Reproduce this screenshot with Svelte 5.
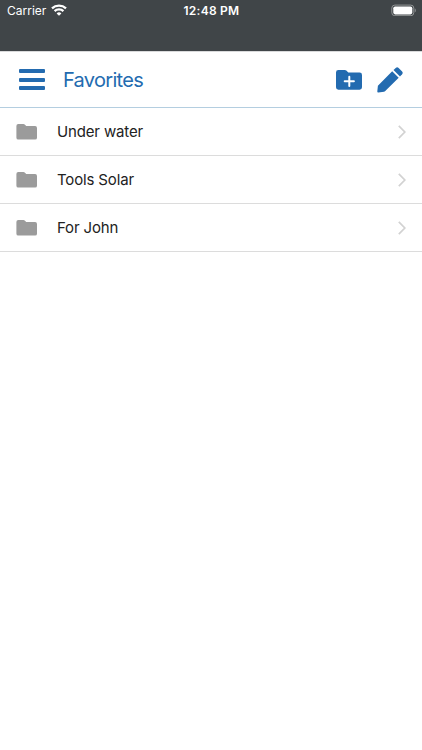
<script lang="ts">
	type Folder = { id: number; name: string };

	let title = 'Favorites';
	let folders: Folder[] = $state([
		{ id: 1, name: 'Under water' },
		{ id: 2, name: 'Tools Solar' },
		{ id: 3, name: 'For John' }
	]);
</script>

<div class="screen">
	<div class="status-bar">
		<div class="status-left">
			<span class="carrier">Carrier</span>
			<svg class="wifi" width="16" height="12" viewBox="0 0 16 12" fill="none" stroke="#fff" stroke-width="2.3">
				<path d="M1 4.4a10.2 10.2 0 0 1 14 0" />
				<path d="M3.6 7.2a6.4 6.4 0 0 1 8.8 0" />
				<path d="M8 11.8 5.6 9.4a3.5 3.5 0 0 1 4.8 0z" fill="#fff" stroke="none" />
			</svg>
		</div>
		<span class="time">12:48 PM</span>
		<div class="status-right">
			<svg width="25" height="12" viewBox="0 0 25 12">
				<rect x="0.8" y="1.1" width="22" height="10.6" rx="3" fill="none" stroke="#929596" stroke-width="1" />
				<rect x="2.3" y="2.4" width="19" height="8" rx="1.8" fill="#fff" />
				<path d="M23.8 4.5v3.8c1.3-.5 1.3-3.3 0-3.8z" fill="#929596" />
			</svg>
		</div>
	</div>

	<header class="toolbar">
		<button class="menu-btn" aria-label="Menu">
			<span class="bar"></span>
			<span class="bar"></span>
			<span class="bar"></span>
		</button>
		<h1>{title}</h1>
		<div class="actions">
			<button aria-label="Add folder">
				<svg width="26" height="20" viewBox="0 0 26 20">
					<path d="M2.4 0h6.4c.6 0 1.1.2 1.5.6l2 2h11.3A2.4 2.4 0 0 1 26 5v12.3a2.4 2.4 0 0 1-2.4 2.4H2.4A2.4 2.4 0 0 1 0 17.3V2.4A2.4 2.4 0 0 1 2.4 0z" fill="#236bb0" />
					<path d="M13.3 6.7v9.2M8.7 11.3h9.2" stroke="#fff" stroke-width="2" stroke-linecap="round" />
				</svg>
			</button>
			<button aria-label="Edit">
				<svg width="26" height="26" viewBox="0 0 26 26" fill="#236bb0">
					<path d="M15.2 4.3 21.7 10.8 8 24.3Q7.6 24.7 7 24.8L1.3 25.6Q.2 25.7.3 24.6L.9 18.7z" />
					<path d="m16.5 3 2.2-2.1q1.5-1.2 2.9 0l3.5 3.5q1.2 1.4 0 2.9L23 9.5z" />
				</svg>
			</button>
		</div>
	</header>

	<ul class="folder-list">
		{#each folders as folder (folder.id)}
			<li>
				<svg class="folder-icon" width="21" height="16" viewBox="0 0 21 16">
					<path d="M2.3 0h5.2q.7 0 1.2.5L10.2 2h8.9A1.9 1.9 0 0 1 21 3.9v9.8a1.9 1.9 0 0 1-1.9 1.9H2.3A1.9 1.9 0 0 1 .4 13.7V1.9A1.9 1.9 0 0 1 2.3 0z" fill="#9b9b9b" />
				</svg>
				<span class="name">{folder.name}</span>
				<svg class="chevron" width="8" height="14" viewBox="0 0 8 14" fill="none" stroke="#d2d2d2" stroke-width="1.7">
					<path d="m.8.9 6 6.1-6 6.1" />
				</svg>
			</li>
		{/each}
	</ul>
</div>

<style>
	:global(body) {
		background: #fff;
	}
	.screen {
		min-height: 750px;
		font-family: Inter, 'Liberation Sans', sans-serif;
		color: #222;
	}
	.status-bar {
		display: grid;
		grid-template-columns: 1fr auto 1fr;
		align-items: start;
		box-sizing: border-box;
		height: 51px;
		padding: 4px 6px 0 7px;
		background: #404548;
		color: #fff;
		font-size: 12px;
		line-height: 14px;
	}
	.status-left {
		display: flex;
		gap: 5px;
	}
	.time {
		font-weight: 600;
		letter-spacing: 0.25px;
	}
	.status-right {
		display: flex;
		justify-content: flex-end;
	}
	.toolbar {
		display: flex;
		align-items: center;
		box-sizing: border-box;
		height: 57px;
		padding: 0 19px;
		border-top: 1px solid #d9dadb;
		border-bottom: 1px solid #b4cee0;
	}
	button {
		display: block;
		padding: 0;
		border: 0;
		background: none;
		cursor: pointer;
	}
	svg {
		display: block;
		flex-shrink: 0;
	}
	.menu-btn {
		display: flex;
		flex-direction: column;
		gap: 4.5px;
		width: 26px;
	}
	.bar {
		height: 4px;
		border-radius: 1px;
		background: #236bb0;
	}
	h1 {
		flex: 1;
		margin: 1px 0 0 18px;
		color: #236bb0;
		font-size: 20px;
		font-weight: 400;
		line-height: 26px;
		letter-spacing: -0.7px;
	}
	.actions {
		display: flex;
		align-items: center;
		gap: 15px;
	}
	.folder-list {
		margin: 0;
		padding: 0;
		list-style: none;
	}
	.folder-list li {
		display: flex;
		align-items: center;
		box-sizing: border-box;
		height: 48px;
		padding: 0 16px;
		border-bottom: 1px solid #dcdcdc;
	}
	.name {
		flex: 1;
		margin-left: 20px;
		font-size: 15px;
		line-height: 20px;
		letter-spacing: -0.15px;
	}
</style>
